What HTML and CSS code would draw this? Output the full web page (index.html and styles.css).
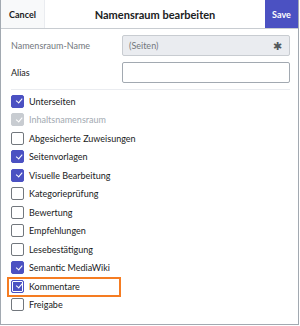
FILE: index.html
```html
<!DOCTYPE html>
<html lang="de">
<head>
<meta charset="utf-8">
<link rel="stylesheet" href="styles.css">
</head>
<body>
<div class="dialog">
  <div class="head">
    <div class="btn cancel">Cancel</div>
    <div class="title">Namensraum bearbeiten</div>
    <div class="btn save">Save</div>
  </div>
  <div class="body">
    <div class="field">
      <div class="label muted">Namensraum-Name</div>
      <div class="input disabled"><span>(Seiten)</span><span class="star">✱</span></div>
    </div>
    <div class="field">
      <div class="label">Alias</div>
      <div class="input"></div>
    </div>
    <div class="sep"></div>
    <ul class="checks">
      <li><span class="cb on"></span>Unterseiten</li>
      <li class="dis"><span class="cb ondis"></span>Inhaltsnamensraum</li>
      <li><span class="cb"></span>Abgesicherte Zuweisungen</li>
      <li><span class="cb on"></span>Seitenvorlagen</li>
      <li><span class="cb on"></span>Visuelle Bearbeitung</li>
      <li><span class="cb"></span>Kategorieprüfung</li>
      <li><span class="cb"></span>Bewertung</li>
      <li><span class="cb"></span>Empfehlungen</li>
      <li><span class="cb"></span>Lesebestätigung</li>
      <li><span class="cb on"></span>Semantic MediaWiki</li>
      <li class="hl"><span class="cb on"></span>Kommentare</li>
      <li><span class="cb"></span>Freigabe</li>
    </ul>
  </div>
</div>
</body>
</html>
```
FILE: styles.css
```css
html, body { margin: 0; padding: 0; background: #fff; }
body { font-family: Lato, "Open Sans", sans-serif; color: #202122; }
.dialog {
  width: 297px; height: 324px;
  border: 1px solid #a2a9b1; border-top: 0;
  box-sizing: content-box;
  display: flex; flex-direction: column;
  position: relative;
}
.head {
  height: 28px; border-bottom: 1px solid #c8ccd1;
  display: flex; align-items: stretch;
}
.btn { display: flex; align-items: center; justify-content: center; font-weight: bold; font-size: 9px; }
.cancel { width: 43px; background: #f8f9fa; border-right: 1px solid #eaecf0; color: #202122; }
.save { width: 33px; background: #4b51c2; color: #fff; }
.title { flex: 1; display: flex; align-items: center; justify-content: center; font-weight: bold; font-size: 11px; }
.body { padding: 6px 8px 0 10px; }
.field { display: flex; align-items: center; height: 21px; margin-bottom: 6px; }
.label { width: 111px; font-size: 9px; }
.muted { color: #72777d; }
.input {
  flex: 1; height: 21px; box-sizing: border-box;
  border: 1px solid #a2a9b1; border-radius: 2px; background: #fff;
  display: flex; align-items: center; justify-content: space-between;
  padding: 0 7px 0 6px; font-size: 9px;
}
.input.disabled { background: #eaecf0; border-color: #c8ccd1; color: #72777d; }
.star { font-size: 11px; color: #54595d; }
.sep { height: 1px; background: #eaecf0; margin: 0 0 2px 0; }
.checks { list-style: none; margin: 0; padding: 0; }
.checks li { height: 18.5px; display: flex; align-items: center; font-size: 9px; position: relative; }
.cb {
  width: 13px; height: 13px; box-sizing: border-box;
  border: 1px solid #72777d; border-radius: 2px; margin-right: 5px; background: #fff;
  position: relative; flex: none;
}
.cb.on { background: #4b51c2; border-color: #4b51c2; }
.cb.ondis { background: #c8ccd1; border-color: #c8ccd1; }
.cb.on::after, .cb.ondis::after {
  content: ""; position: absolute; left: 3.5px; top: 2.5px;
  width: 5px; height: 2.5px;
  border-left: 1px solid #fff; border-bottom: 1px solid #fff;
  transform: rotate(-50deg);
}
.dis { color: #a2a9b1; }
.hl::before {
  content: ""; position: absolute; left: -4px; top: 0; width: 110px; height: 16px;
  border: 2px solid #f57c22;
}
.hl .cb.on { box-shadow: inset 0 0 0 1px #fff; border-color: #4b51c2; }
```
